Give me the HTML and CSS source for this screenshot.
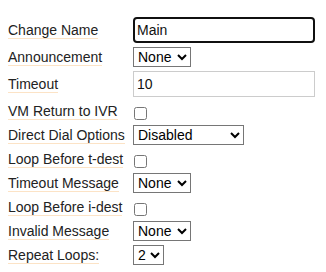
FILE: index.html
```html
<!DOCTYPE html>
<html lang="en">
<head>
  <meta charset="UTF-8">
  <title>Menu Settings</title>
  <meta name="viewport" content="width=device-width, initial-scale=1">
  <link rel="stylesheet" href="styles.css">
</head>
<body>
  <form class="settings" id="menuForm">
    <div class="row">
      <div class="key"><label for="name">Change Name</label></div>
      <input type="text" class="txt active" id="name" name="name" value="Main">
    </div>
    <div class="row">
      <div class="key"><label for="announce">Announcement</label></div>
      <select class="sel sel-none" id="announce" name="announce">
        <option>None</option>
      </select>
    </div>
    <div class="row">
      <div class="key"><label for="timeout">Timeout</label></div>
      <input type="text" class="txt" id="timeout" name="timeout" value="10">
    </div>
    <div class="row">
      <div class="key"><label for="vmReturn">VM Return to IVR</label></div>
      <input type="checkbox" class="chk" id="vmReturn" name="vmReturn">
    </div>
    <div class="row">
      <div class="key"><label for="directDial">Direct Dial Options</label></div>
      <select class="sel sel-wide" id="directDial" name="directDial">
        <option>Disabled</option>
        <option>Enabled</option>
      </select>
    </div>
    <div class="row">
      <div class="key"><label for="loopT">Loop Before t-dest</label></div>
      <input type="checkbox" class="chk" id="loopT" name="loopT">
    </div>
    <div class="row">
      <div class="key"><label for="timeoutMsg">Timeout Message</label></div>
      <select class="sel sel-none" id="timeoutMsg" name="timeoutMsg">
        <option>None</option>
      </select>
    </div>
    <div class="row">
      <div class="key"><label for="loopI">Loop Before i-dest</label></div>
      <input type="checkbox" class="chk" id="loopI" name="loopI">
    </div>
    <div class="row">
      <div class="key"><label for="invalidMsg">Invalid Message</label></div>
      <select class="sel sel-none" id="invalidMsg" name="invalidMsg">
        <option>None</option>
      </select>
    </div>
    <div class="row">
      <div class="key"><label for="loops">Repeat Loops:</label></div>
      <select class="sel sel-num" id="loops" name="loops">
        <option>1</option>
        <option selected>2</option>
        <option>3</option>
      </select>
    </div>
  </form>
</body>
</html>
```

FILE: styles.css
```css
body {
  font-family: "Liberation Sans", Arial, sans-serif;
  font-size: 14px;
  color: #222;
  background: #fff;
  margin: 0;
  padding: 17px 8px 0 8px;
}
.settings {
  display: flex;
  flex-direction: column;
  gap: 4px;
}
.row {
  display: flex;
  align-items: center;
  min-height: 20px;
}
.key {
  width: 125px;
  flex: none;
}
.key label {
  display: inline-block;
  line-height: 16px;
  border-bottom: 1px solid #fce3c6;
}
.txt {
  box-sizing: border-box;
  width: 182px;
  height: 26px;
  margin: 0;
  padding: 0 3px;
  border: 1px solid #ccc;
  font-family: inherit;
  font-size: 14px;
  color: #111;
}
.txt.active {
  border: 2px solid #101010;
  border-radius: 4px;
  padding: 0 2px;
  outline: none;
}
.sel {
  box-sizing: border-box;
  height: 20px;
  margin: 0;
  font-family: inherit;
  font-size: 14px;
  color: #000;
  background: #fff;
  border: 1px solid #767676;
}
.sel-none {
  width: 58px;
}
.sel-wide {
  width: 111px;
}
.sel-num {
  width: 31px;
}
.chk {
  width: 13px;
  height: 13px;
  margin: 4px 0 0 1px;
}
```
